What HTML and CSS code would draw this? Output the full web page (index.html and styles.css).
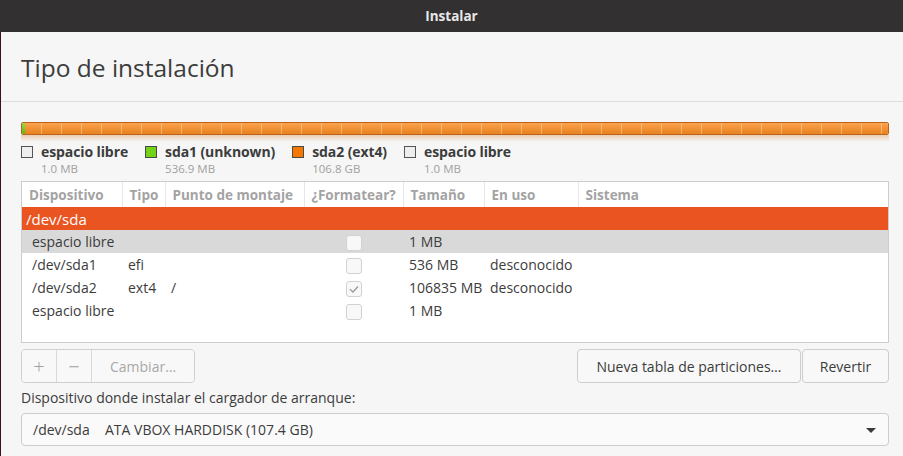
FILE: index.html
```html
<!DOCTYPE html>
<html lang="es">
<head>
<meta charset="utf-8">
<title>Instalar</title>
<link rel="stylesheet" href="styles.css">
</head>
<body>
<div class="window">
  <header class="titlebar">Instalar</header>
  <div class="frame">
    <div class="heading"><h1>Tipo de instalación</h1></div>
    <div class="content">
      <div class="diskbar">
        <div class="bar">
          <div class="seg seg-green"></div>
          <div class="seg seg-orange"></div>
        </div>
        <div class="reflection"></div>
      </div>

      <div class="legend">
        <div class="litem">
          <span class="swatch sw-free"></span>
          <div class="ltext"><span class="lname">espacio libre</span><span class="lsize">1.0 MB</span></div>
        </div>
        <div class="litem">
          <span class="swatch sw-green"></span>
          <div class="ltext"><span class="lname">sda1 (unknown)</span><span class="lsize">536.9 MB</span></div>
        </div>
        <div class="litem">
          <span class="swatch sw-orange"></span>
          <div class="ltext"><span class="lname">sda2 (ext4)</span><span class="lsize">106.8 GB</span></div>
        </div>
        <div class="litem">
          <span class="swatch sw-free"></span>
          <div class="ltext"><span class="lname">espacio libre</span><span class="lsize">1.0 MB</span></div>
        </div>
      </div>

      <div class="tablebox">
        <table class="parts">
          <colgroup>
            <col class="c1"><col class="c2"><col class="c3"><col class="c4"><col class="c5"><col class="c6"><col class="c7">
          </colgroup>
          <thead>
            <tr>
              <th>Dispositivo</th><th>Tipo</th><th>Punto de montaje</th><th>¿Formatear?</th><th>Tamaño</th><th>En uso</th><th class="last">Sistema</th>
            </tr>
          </thead>
          <tbody>
            <tr class="disk"><td colspan="7">/dev/sda</td></tr>
            <tr class="sel">
              <td class="dev">espacio libre</td><td></td><td></td><td class="chk"><span class="cb"></span></td><td>1 MB</td><td></td><td></td>
            </tr>
            <tr>
              <td class="dev">/dev/sda1</td><td>efi</td><td></td><td class="chk"><span class="cb"></span></td><td>536 MB</td><td>desconocido</td><td></td>
            </tr>
            <tr>
              <td class="dev">/dev/sda2</td><td>ext4</td><td>/</td><td class="chk"><span class="cb checked"><svg viewBox="0 0 16 16" width="16" height="16"><path d="M4 8.2 L7 11 L12 5.5" fill="none" stroke="#9a9a9a" stroke-width="1.3"/></svg></span></td><td>106835 MB</td><td>desconocido</td><td></td>
            </tr>
            <tr>
              <td class="dev">espacio libre</td><td></td><td></td><td class="chk"><span class="cb"></span></td><td>1 MB</td><td></td><td></td>
            </tr>
          </tbody>
        </table>
      </div>

      <div class="toolbar">
        <div class="btngroup">
          <button class="btn icon" disabled>+</button>
          <button class="btn icon" disabled>−</button>
          <button class="btn change" disabled>Cambiar…</button>
        </div>
        <div class="rightbtns">
          <button class="btn newtable">Nueva tabla de particiones…</button>
          <button class="btn revert">Revertir</button>
        </div>
      </div>

      <div class="bootlabel">Dispositivo donde instalar el cargador de arranque:</div>
      <div class="combo">
        <span class="cdev">/dev/sda</span><span class="cname">ATA VBOX HARDDISK (107.4 GB)</span>
        <span class="arrow"></span>
      </div>
    </div>
  </div>
</div>
</body>
</html>
```

FILE: styles.css
```css
* { box-sizing: border-box; }

html, body {
  margin: 0;
  padding: 0;
}

body {
  width: 903px;
  height: 456px;
  overflow: hidden;
  background: #f6f6f6;
  font-family: "Open Sans", "Noto Sans", sans-serif;
  font-size: 14px;
  color: #3c3c3c;
}

.window {
  display: flex;
  flex-direction: column;
  height: 456px;
}

.titlebar {
  height: 32px;
  flex: none;
  background: #323030;
  color: #e8e8e8;
  font-weight: bold;
  font-size: 13.5px;
  display: flex;
  align-items: center;
  justify-content: center;
}

.frame {
  flex: 1;
  border-left: 1px solid #3d0c27;
  background: #f6f6f6;
}

.heading {
  height: 70px;
  border-bottom: 1px solid #dcdcdc;
  padding-left: 20px;
  display: flex;
  align-items: center;
}

.heading h1 {
  margin: 0;
  font-weight: normal;
  font-size: 24.5px;
  color: #3c3c3c;
  padding-top: 1px;
}

.content {
  padding: 20px 14px 0 20px;
}

/* disk bar */
.diskbar {
  height: 20px;
}

.bar {
  height: 13px;
  display: flex;
  border: 1px solid #bb6419;
  border-radius: 2px;
  overflow: hidden;
}

.seg-green {
  width: 3px;
  background: linear-gradient(#8ee03a, #5fb614);
}

.seg-orange {
  flex: 1;
  background:
    repeating-linear-gradient(to right, transparent 0 16px, rgba(255,225,185,0.45) 16px 17px, transparent 17px 20px),
    linear-gradient(#fca24e, #e8811f);
}

.reflection {
  height: 7px;
  background: linear-gradient(rgba(210,120,40,0.32), rgba(246,246,246,0));
}

/* legend */
.legend {
  display: flex;
  gap: 17px;
  height: 39px;
}

.litem {
  display: flex;
  gap: 8px;
}

.swatch {
  width: 12px;
  height: 12px;
  margin-top: 4px;
  border: 1px solid #555;
  flex: none;
}

.sw-free { background: #eeeeee; }
.sw-green { background: #73d216; border-color: #4a4a4a; }
.sw-orange { background: #f57900; border-color: #4a4a4a; }

.ltext {
  display: flex;
  flex-direction: column;
}

.lname {
  font-weight: bold;
  font-size: 14px;
  line-height: 19px;
  letter-spacing: -0.1px;
}

.lsize {
  font-size: 11.5px;
  color: #a0a0a0;
  line-height: 16px;
}

/* table */
.tablebox {
  height: 162px;
  border: 1px solid #cdcdcd;
  background: #fff;
}

.parts {
  width: 100%;
  border-collapse: collapse;
  table-layout: fixed;
}

.c1 { width: 100px; }
.c2 { width: 43px; }
.c3 { width: 139px; }
.c4 { width: 99px; }
.c5 { width: 81px; }
.c6 { width: 94px; }

.parts th {
  height: 25px;
  padding: 0 0 0 7px;
  text-align: left;
  font-weight: bold;
  color: #a3a3a3;
  font-size: 13.5px;
  border-right: 1px solid #e6e6e6;
  white-space: nowrap;
  overflow: hidden;
}

.parts th.last { border-right: none; }

.parts td {
  height: 23px;
  padding: 0 0 0 6px;
  white-space: nowrap;
  overflow: visible;
}

.parts td.dev { padding-left: 10px; }

.parts tr.disk td {
  background: #e95420;
  color: #fff;
  padding-left: 4px;
  font-size: 15px;
}

.parts tr.sel td {
  background: #d9d9d9;
}

.parts td.chk {
  padding: 0;
  text-align: center;
}

.cb {
  display: inline-block;
  width: 16px;
  height: 16px;
  border: 1px solid #d2d2d2;
  border-radius: 3px;
  background: #f8f8f8;
  vertical-align: middle;
  position: relative;
}

.cb svg {
  position: absolute;
  left: -1px;
  top: -1px;
}

/* buttons */
.toolbar {
  display: flex;
  justify-content: space-between;
  margin-top: 6px;
  height: 34px;
}

.btngroup {
  display: flex;
  border: 1px solid #cfcfcf;
  border-radius: 4px;
  background: #f8f8f8;
  overflow: hidden;
}

.btn {
  font-family: inherit;
  font-size: 14px;
  color: #3c3c3c;
  background: #f8f8f8;
  border: 1px solid #cdcdcd;
  border-radius: 4px;
  height: 34px;
  padding: 0;
  margin: 0;
}

.btngroup .btn {
  border: none;
  border-radius: 0;
  height: 32px;
  color: #a8a8a8;
}

.btn.icon {
  width: 35px;
  border-right: 1px solid #d8d8d8;
  font-size: 20px;
  font-weight: 300;
  color: #a0a0a0;
}

.btn.change {
  width: 102px;
  font-size: 14px;
}

.rightbtns {
  display: flex;
  gap: 1px;
}

.btn.newtable { width: 224px; }
.btn.revert { width: 87px; }

.bootlabel {
  margin-top: 6px;
  height: 24px;
  line-height: 18px;
  font-size: 14px;
}

.combo {
  height: 33px;
  border: 1px solid #cdcdcd;
  border-radius: 4px;
  background: #fafafa;
  display: flex;
  align-items: center;
  padding-left: 11px;
  position: relative;
}

.cdev { width: 72px; }

.arrow {
  position: absolute;
  right: 12px;
  top: 14px;
  width: 0;
  height: 0;
  border-left: 5px solid transparent;
  border-right: 5px solid transparent;
  border-top: 5px solid #3a3a3a;
}
```
